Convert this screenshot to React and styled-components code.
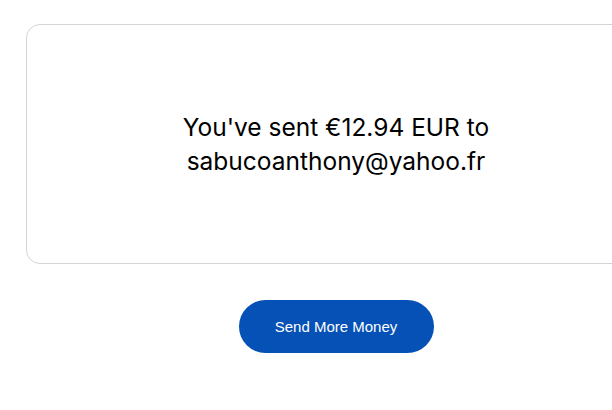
import React from 'react';
import styled, {createGlobalStyle} from 'styled-components';

const GlobalStyle = createGlobalStyle`
  html, body {
    margin: 0;
    padding: 0;
    background: #ffffff;
    overflow: hidden;
  }
  body {
    font-family: Inter, "Liberation Sans", Arial, sans-serif;
  }
`

function App() {
  return (
    <>
      <GlobalStyle />
      <Page>
        <Card>
          <Message>
            You've sent €12.94 EUR to<br />
            sabucoanthony@yahoo.fr
          </Message>
        </Card>
        <Actions>
          <PrimaryButton type="button">Send More Money</PrimaryButton>
        </Actions>
      </Page>
    </>
  )
}

export default App;

const Page = styled.div`
  width: 620px;
  padding: 24px 0 0 26px;
  display: flex;
  flex-direction: column;
  align-items: stretch;
`

const Card = styled.div`
  height: 240px;
  box-sizing: border-box;
  border: 1px solid #d4d4d4;
  border-radius: 14px;
  display: flex;
  align-items: center;
  justify-content: center;
`

const Message = styled.p`
  margin: 0;
  font-family: Inter, "Liberation Sans", sans-serif;
  font-size: 24.5px;
  line-height: 34px;
  color: #000000;
  text-align: center;
`

const Actions = styled.div`
  display: flex;
  justify-content: center;
  padding-top: 36px;
`

const PrimaryButton = styled.button`
  width: 195px;
  height: 53px;
  border: none;
  border-radius: 27px;
  background: #0551b5;
  color: #ffffff;
  font-family: "Liberation Sans", Arial, sans-serif;
  font-size: 15px;
  cursor: pointer;
`
